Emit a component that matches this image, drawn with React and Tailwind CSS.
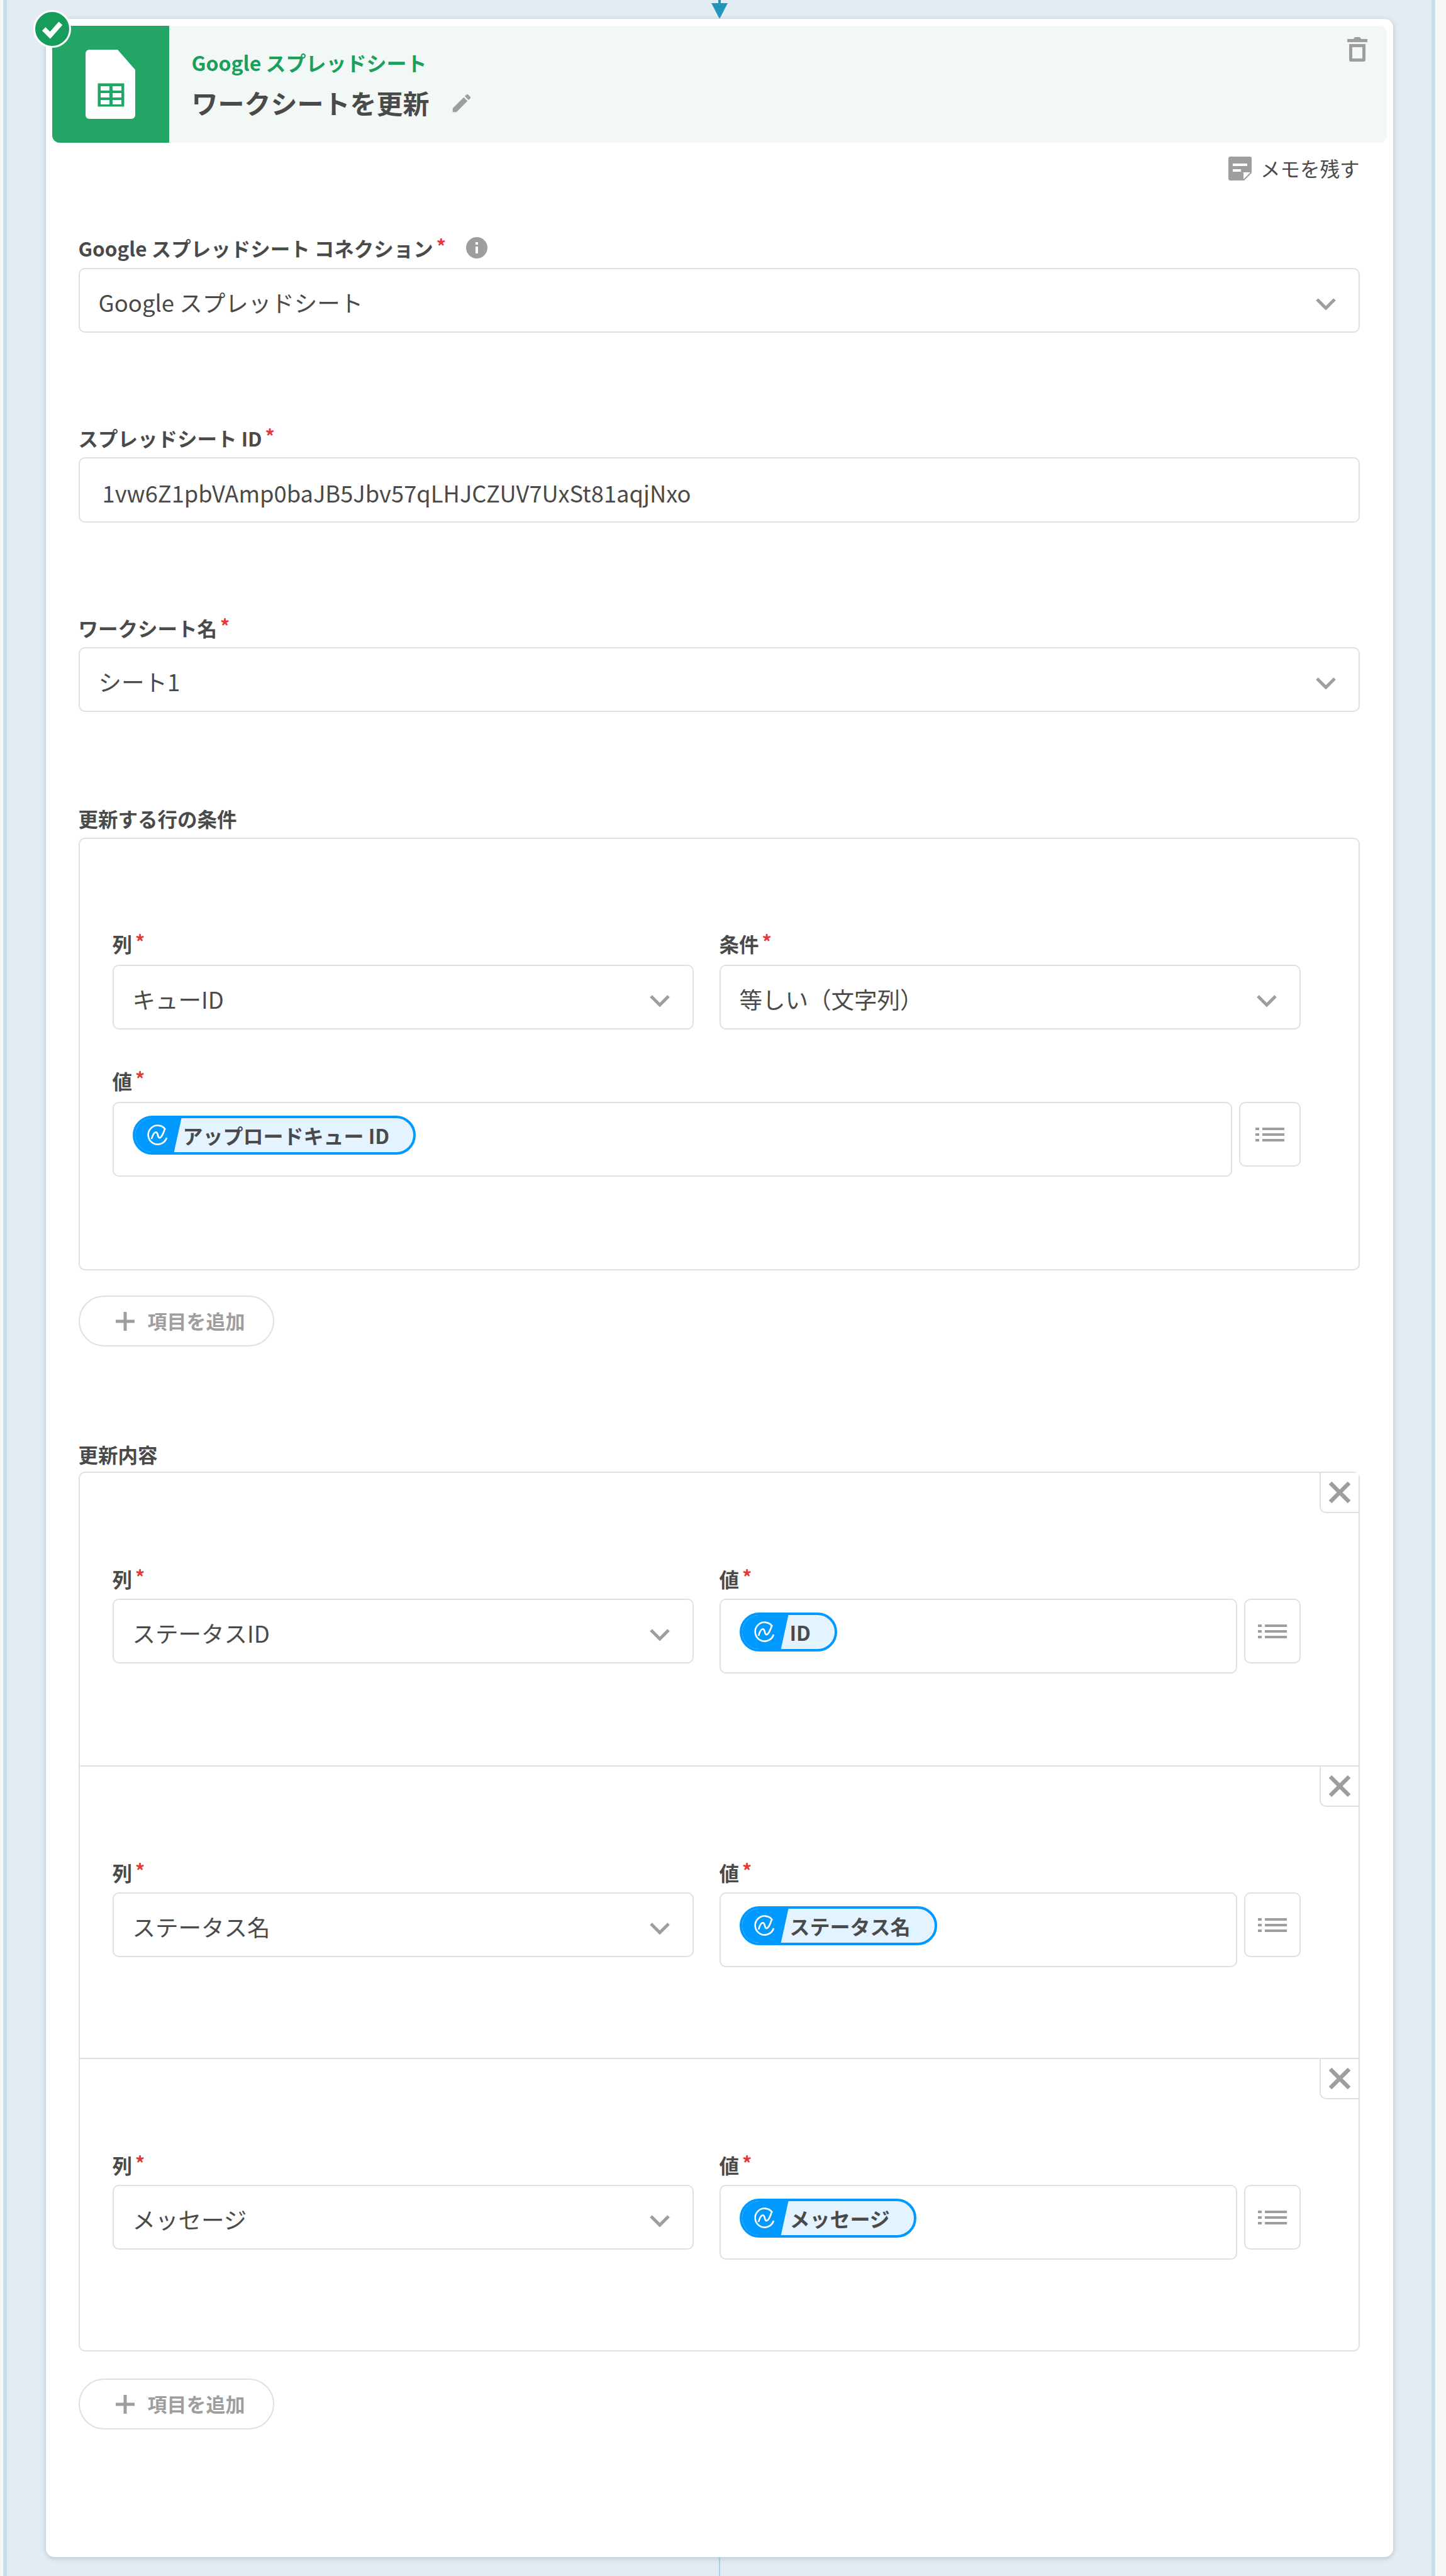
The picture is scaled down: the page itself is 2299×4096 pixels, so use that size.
import React from "react";

const font = { fontFamily: '"Noto Sans CJK JP", "Noto Sans", sans-serif' };

function Chevron() {
  return (
    <svg width="32" height="20" viewBox="0 0 32 20" className="absolute right-[36px] top-[45px]">
      <path d="M2 3 L16 17 L30 3" fill="none" stroke="#9e9e9e" strokeWidth="5" />
    </svg>
  );
}

function Label({ text, required = true, children }) {
  return (
    <div className="flex h-[40px] items-center text-[31.5px] font-bold leading-[40px] text-[#4a4a4a]">
      <span>{text}</span>
      {required && <span className="relative -top-[4px] ml-[5px] text-[30px] font-bold leading-none text-[#e53935]">*</span>}
      {children}
    </div>
  );
}

function Select({ value }) {
  return (
    <div className="relative flex h-[103px] items-center rounded-[10px] border-2 border-[#e0e0e0] bg-white pl-[30px] pt-[8px] text-[36.5px] text-[#4a4a4a]">
      {value}
      <Chevron />
    </div>
  );
}

function TextInput({ value }) {
  return (
    <div className="flex h-[104px] items-center rounded-[10px] border-2 border-[#e0e0e0] bg-white pl-[36px] pt-[8px] text-[36.3px] text-[#4a4a4a]">
      {value}
    </div>
  );
}

function ChipIcon() {
  return (
    <svg width="36" height="36" viewBox="0 0 36 36" fill="none" stroke="white" strokeWidth="2.6">
      <path d="M30 9 A15 15 0 1 0 32 22" />
      <path d="M8 24 C12 10 17 12 18 18 C19 25 24 24 29 8" />
    </svg>
  );
}

function Chip({ text }) {
  return (
    <div className="relative inline-flex h-[62px] items-center overflow-hidden rounded-full border-4 border-[#0099ff] bg-[#e3f3ff] pl-[76px] pr-[38px] text-[32px] font-bold text-[#4a4a4a]">
      <div className="absolute bottom-0 left-0 top-0 flex w-[74px] items-center bg-[#0099ff] pl-[18px] [clip-path:polygon(0_0,100%_0,84%_100%,0_100%)]">
        <ChipIcon />
      </div>
      {text}
    </div>
  );
}

function ValueInput({ chip, buttonWidth }) {
  return (
    <div className="flex items-start gap-[11px]">
      <div className="flex h-[119px] flex-1 items-start rounded-[10px] border-2 border-[#e0e0e0] bg-white pl-[30px] pt-[20px]">
        <Chip text={chip} />
      </div>
      <div className={`flex h-[103px] items-center justify-center rounded-[10px] border-2 border-[#e0e0e0] bg-white ${buttonWidth}`}>
        <svg width="46" height="24" viewBox="0 0 46 24" fill="#9e9e9e">
          <rect x="0" y="1" width="6" height="4" />
          <rect x="0" y="10" width="6" height="4" />
          <rect x="0" y="19" width="6" height="4" />
          <rect x="11" y="1" width="35" height="4" />
          <rect x="11" y="10" width="35" height="4" />
          <rect x="11" y="19" width="35" height="4" />
        </svg>
      </div>
    </div>
  );
}

function AddButton() {
  return (
    <div className="flex h-[81px] w-[311px] items-center rounded-full border-2 border-[#e0e0e0] bg-white pl-[56px] text-[31px] font-bold text-[#9e9e9e]">
      <svg width="32" height="32" viewBox="0 0 32 32" fill="#9e9e9e">
        <rect x="13.5" y="1" width="5" height="30" />
        <rect x="1" y="13.5" width="30" height="5" />
      </svg>
      <span className="ml-[20px]">項目を追加</span>
    </div>
  );
}

const rows = [
  { column: "ステータスID", chip: "ID" },
  { column: "ステータス名", chip: "ステータス名" },
  { column: "メッセージ", chip: "メッセージ" },
];

export default function App() {
  return (
    <div className="h-[4096px] w-[2299px] overflow-hidden bg-[#f6f7f9] pl-[5px] pr-[17px]" style={font}>
      <div className="flex h-full flex-col items-center border-x-[6px] border-[#c5dfec] bg-[#e4ecf3]">
        {/* arrow coming in from the previous step */}
        <div className="flex h-[30px] w-[26px] flex-col items-center">
          <div className="h-[5px] w-[4px] bg-[#2196bd]" />
          <svg width="26" height="25" viewBox="0 0 26 25">
            <path d="M0 0 H26 L13 25 Z" fill="#2196bd" />
          </svg>
        </div>

        <div className="relative h-[4036px] w-[2142px] rounded-[14px] bg-white px-[10px] pt-[11px] shadow-[0_2px_8px_rgba(90,120,140,0.35)]">
          {/* status badge */}
          <div className="absolute -left-[20px] -top-[14px] z-10 flex h-[60px] w-[60px] items-center justify-center rounded-full border-[3px] border-white bg-[#169c5b]">
            <svg width="40" height="40" viewBox="0 0 36 36">
              <path d="M6 18 L15 27 L30 10" fill="none" stroke="white" strokeWidth="7" />
            </svg>
          </div>

          {/* header */}
          <div className="relative flex h-[186px] overflow-hidden rounded-[12px] bg-[#f2f8f5]">
            <div className="flex w-[186px] items-center justify-center bg-[#22a565]">
              <svg width="79" height="110" viewBox="0 0 79 110">
                <path d="M6 0 H51 L79 32 V104 A6 6 0 0 1 73 110 H6 A6 6 0 0 1 0 104 V6 A6 6 0 0 1 6 0 Z" fill="white" />
                <rect x="19.5" y="53.5" width="42" height="37" fill="#22a565" />
                <rect x="24" y="58" width="14" height="7" fill="white" />
                <rect x="43" y="58" width="14" height="7" fill="white" />
                <rect x="24" y="69" width="14" height="7" fill="white" />
                <rect x="43" y="69" width="14" height="7" fill="white" />
                <rect x="24" y="80" width="14" height="7" fill="white" />
                <rect x="43" y="80" width="14" height="7" fill="white" />
              </svg>
            </div>
            <div className="pl-[36px] pt-[36px]">
              <div className="text-[32px] font-bold leading-[44px] text-[#1a9f5c]">Google スプレッドシート</div>
              <div className="mt-[15px] flex items-center text-[42px] font-bold leading-[54px] text-[#4a4a4a]">
                ワークシートを更新
                <svg width="38" height="38" viewBox="0 0 24 24" fill="#9e9e9e" className="ml-[32px] mt-[2px]">
                  <path d="M3 17.25V21h3.75L17.81 9.94l-3.75-3.75L3 17.25zM20.71 7.04a1 1 0 0 0 0-1.41l-2.34-2.34a1 1 0 0 0-1.41 0l-1.83 1.83 3.75 3.75 1.83-1.83z" />
                </svg>
              </div>
            </div>
            <svg width="32" height="42" viewBox="0 0 32 42" fill="#9e9e9e" className="absolute right-[31px] top-[16px]">
              <path d="M0 5 H10 L12 2 H20 L22 5 H32 V10 H0 Z" />
              <path fillRule="evenodd" d="M3 13 H29 V38 A3 3 0 0 1 26 41 H6 A3 3 0 0 1 3 38 Z M8 18 V36 H24 V18 Z" />
            </svg>
          </div>

          <div className="pl-[42px] pr-[43px]">
            {/* memo link */}
            <div className="mt-[21px] flex h-[40px] items-center justify-end text-[31.5px] text-[#4a4a4a]">
              <svg width="37" height="38" viewBox="0 0 37 38" className="mr-[14px]">
                <path d="M3 0 H34 A3 3 0 0 1 37 3 V26 L25 38 H3 A3 3 0 0 1 0 35 V3 A3 3 0 0 1 3 0 Z" fill="#9e9e9e" />
                <rect x="7" y="11" width="23" height="4" fill="white" />
                <rect x="7" y="20" width="13" height="4" fill="white" />
                <path d="M24 36 V25 H35 Z" fill="white" />
              </svg>
              メモを残す
            </div>

            <div className="mt-[86px]">
              <Label text="Google スプレッドシート コネクション">
                <svg width="34" height="34" viewBox="0 0 34 34" className="ml-[32px]">
                  <circle cx="17" cy="17" r="17" fill="#9e9e9e" />
                  <rect x="15" y="15" width="4" height="11" fill="white" />
                  <rect x="15" y="8" width="4" height="4" fill="white" />
                </svg>
              </Label>
              <div className="mt-[12px]">
                <Select value="Google スプレッドシート" />
              </div>
            </div>

            <div className="mt-[147px]">
              <Label text="スプレッドシート ID" />
              <div className="mt-[11px]">
                <TextInput value="1vw6Z1pbVAmp0baJB5Jbv57qLHJCZUV7UxSt81aqjNxo" />
              </div>
            </div>

            <div className="mt-[147px]">
              <Label text="ワークシート名" />
              <div className="mt-[11px]">
                <Select value="シート1" />
              </div>
            </div>

            <div className="mt-[149px]">
              <Label text="更新する行の条件" required={false} />
              <div className="mt-[11px] h-[688px] rounded-[10px] border-2 border-[#e0e0e0] pl-[52px] pr-[92px] pt-[146px]">
                <div className="grid grid-cols-[924px_924px] gap-x-[41px]">
                  <div>
                    <Label text="列" />
                    <div className="mt-[14px]">
                      <Select value="キューID" />
                    </div>
                  </div>
                  <div>
                    <Label text="条件" />
                    <div className="mt-[14px]">
                      <Select value="等しい（文字列）" />
                    </div>
                  </div>
                </div>
                <div className="mt-[61px]">
                  <Label text="値" />
                  <div className="mt-[14px]">
                    <ValueInput chip="アップロードキュー ID" buttonWidth="w-[98px]" />
                  </div>
                </div>
              </div>
              <div className="mt-[40px]">
                <AddButton />
              </div>
            </div>

            <div className="mt-[151px]">
              <Label text="更新内容" required={false} />
              <div className="mt-[8px] rounded-[10px] border-2 border-[#e0e0e0]">
                {rows.map((row, i) => (
                  <div key={row.column} className={`relative h-[465px] pl-[52px] pr-[92px] pt-[148px] ${i > 0 ? "border-t-2 border-[#e0e0e0]" : ""}`}>
                    <div className="absolute right-0 top-0 flex h-[64px] w-[62px] items-center justify-center rounded-bl-[10px] border-b-2 border-l-2 border-[#e0e0e0] bg-white">
                      <svg width="36" height="36" viewBox="0 0 36 36">
                        <path d="M3 3 L33 33 M33 3 L3 33" stroke="#9e9e9e" strokeWidth="6.5" />
                      </svg>
                    </div>
                    <div className="grid grid-cols-[924px_924px] gap-x-[41px]">
                      <div>
                        <Label text="列" />
                        <div className="mt-[12px]">
                          <Select value={row.column} />
                        </div>
                      </div>
                      <div>
                        <Label text="値" />
                        <div className="mt-[12px]">
                          <ValueInput chip={row.chip} buttonWidth="w-[90px]" />
                        </div>
                      </div>
                    </div>
                  </div>
                ))}
              </div>
              <div className="mt-[43px]">
                <AddButton />
              </div>
            </div>
          </div>
        </div>

        {/* line to the next step */}
        <div className="w-[2px] flex-1 bg-[#a9d3e4]" />
      </div>
    </div>
  );
}
